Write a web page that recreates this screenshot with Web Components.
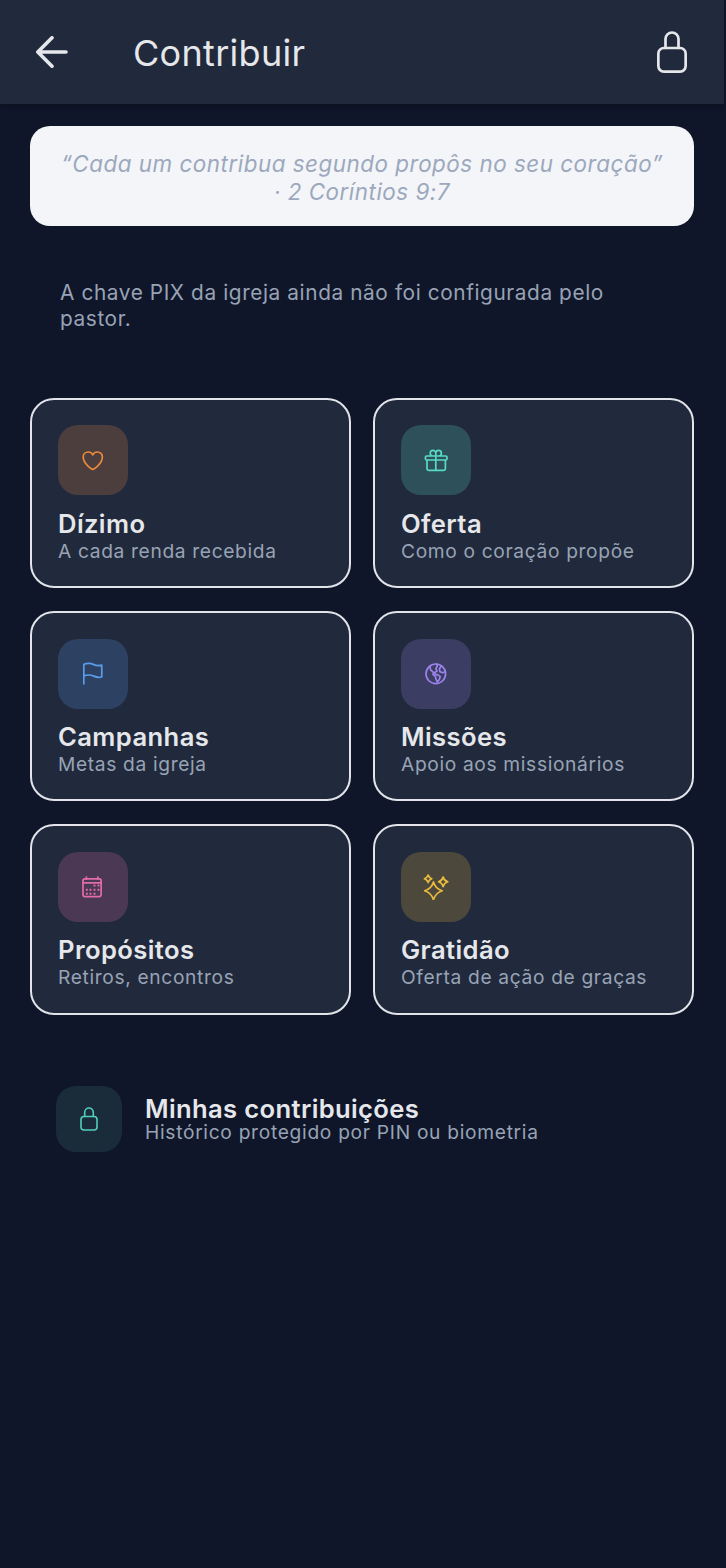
<!DOCTYPE html>
<html lang="pt">
<head>
<meta charset="utf-8">
<title>Contribuir</title>
<style>
	html, body {
		margin: 0;
		height: 100%;
		background: #0f1629;
	}
	body {
		font-family: Inter, "Liberation Sans", sans-serif;
		display: flex;
		flex-direction: column;
	}
</style>
</head>
<body>
<contrib-screen>
	<app-bar slot="bar" heading="Contribuir"></app-bar>
	<verse-card>“Cada um contribua segundo propôs no seu coração” · 2 Coríntios 9:7</verse-card>
	<pix-note>A chave PIX da igreja ainda não foi configurada pelo pastor.</pix-note>
	<card-grid>
		<contrib-card icon="heart" color="#fb923c" heading="Dízimo" detail="A cada renda recebida"></contrib-card>
		<contrib-card icon="gift" color="#5eead4" heading="Oferta" detail="Como o coração propõe"></contrib-card>
		<contrib-card icon="flag" color="#60a5fa" heading="Campanhas" detail="Metas da igreja"></contrib-card>
		<contrib-card icon="globe" color="#a78bfa" heading="Missões" detail="Apoio aos missionários"></contrib-card>
		<contrib-card icon="calendar" color="#f472b6" heading="Propósitos" detail="Retiros, encontros"></contrib-card>
		<contrib-card icon="sparkles" color="#fcc83c" heading="Gratidão" detail="Oferta de ação de graças"></contrib-card>
	</card-grid>
	<history-row heading="Minhas contribuições" detail="Histórico protegido por PIN ou biometria"></history-row>
</contrib-screen>

<script>
const ICONS = {
	heart: `<path d="M21 8.25c0-2.485-2.099-4.5-4.688-4.5-1.935 0-3.597 1.126-4.312 2.733-.715-1.607-2.377-2.733-4.313-2.733C5.1 3.75 3 5.765 3 8.25c0 7.22 9 12 9 12s9-4.78 9-12Z"/>`,
	gift: `<path d="M21 11.25v8.25a1.5 1.5 0 0 1-1.5 1.5H5.25a1.5 1.5 0 0 1-1.5-1.5v-8.25M12 4.875A2.625 2.625 0 1 0 9.375 7.5H12m0-2.625V7.5m0-2.625A2.625 2.625 0 1 1 14.625 7.5H12m0 0V21m-8.625-9.75h18c.621 0 1.125-.504 1.125-1.125v-1.5c0-.621-.504-1.125-1.125-1.125h-18c-.621 0-1.125.504-1.125 1.125v1.5c0 .621.504 1.125 1.125 1.125Z"/>`,
	flag: `<path d="M3.6 21.4V3C7 2 10.5 2.2 13 3.4S17.5 4.7 20.4 3.9V15C17.5 15.7 15.5 15.4 13 14.2S7 12.8 3.6 13.9"/>`,
	globe: `<circle cx="12" cy="12" r="9.2"/><path d="M6.5 4.9 7 8.2 9.8 10.6 9.4 12.8 11.8 14.6 12 16.6 13.4 19.6 15.2 17.6 16.2 14.6 14 13 11.6 12.6 11 10.8 13.2 9.4 12 7 13.4 5 12.8 2.9M17.2 4.6 15.4 7.2 15.8 10 18.6 11 20.9 10"/>`,
	calendar: `<rect x="2.8" y="4.6" width="17" height="16.6" rx="1.9"/><path d="M2.8 8.4H19.8M6 2.8V4.6M16.7 2.8V4.6"/><g fill="currentColor" stroke="none"><rect x="12.7" y="9.9" width="1.8" height="1.8"/><rect x="16.4" y="9.9" width="1.8" height="1.8"/><rect x="5.5" y="13.9" width="1.8" height="1.8"/><rect x="8.9" y="13.9" width="1.8" height="1.8"/><rect x="12.7" y="13.9" width="1.8" height="1.8"/><rect x="16.4" y="13.9" width="1.8" height="1.8"/><rect x="5.5" y="17.6" width="1.8" height="1.8"/><rect x="8.9" y="17.6" width="1.8" height="1.8"/><rect x="12.7" y="17.6" width="1.8" height="1.8"/></g>`,
	sparkles: `<path d="M9.8 7.4Q11.8 13.8 18 15.75 11.8 17.7 9.8 24.1 7.8 17.7 1.6 15.75 7.8 13.8 9.8 7.4Z"/><path d="M4.8 1Q5.6 3.7 8.3 4.5 5.6 5.3 4.8 8 4 5.3 1.3 4.5 4 3.7 4.8 1Z"/><path d="M18.9 2.8Q19.8 6.4 23.2 7.3 19.8 8.2 18.9 11.8 18 8.2 14.6 7.3 18 6.4 18.9 2.8Z"/>`,
};

class AppBar extends HTMLElement {
	constructor() {
		super();
		this.attachShadow({ mode: "open" }).innerHTML = `<style>
			:host {
				display: flex;
				align-items: center;
				height: 104px;
				margin-right: 2px;
				padding: 0 36px;
				background: #212a3c;
				color: #e5e7eb;
				box-shadow: 0 2px 6px rgba(0, 0, 0, 0.25);
			}
			.back { display: block; width: 32px; height: 32px; }
			h1 {
				flex: 1;
				margin: 2px 0 0 65px;
				font: 400 36px/44px Inter, "Liberation Sans", sans-serif;
				letter-spacing: 0.3px;
			}
			.lock { display: block; width: 30px; height: 42px; margin-right: 1px; }
		</style>
		<svg class="back" viewBox="0 0 32 32" fill="none" stroke="currentColor" stroke-width="3.6" stroke-linecap="round" stroke-linejoin="round">
			<path d="M1.8 16H30M16 1.8 1.8 16 16 30.2"/>
		</svg>
		<h1>${this.getAttribute("heading")}</h1>
		<svg class="lock" viewBox="0 0 30 42" fill="none" stroke="currentColor" stroke-width="2.7" stroke-linecap="round" stroke-linejoin="round">
			<path d="M8.5 17V8a6.5 6.5 0 0 1 13 0v9"/>
			<rect x="1.35" y="17" width="27.3" height="23.6" rx="5.5"/>
		</svg>`;
	}
}
customElements.define("app-bar", AppBar);

class VerseCard extends HTMLElement {
	constructor() {
		super();
		this.attachShadow({ mode: "open" }).innerHTML = `<style>
			:host {
				display: block;
				box-sizing: border-box;
				height: 100px;
				margin: 22px 32px 0 30px;
				padding: 24px 28px;
				border-radius: 20px;
				background: #f3f5f9;
				color: #9ca8bd;
				font: italic 400 22.4px/28px Inter, "Liberation Sans", sans-serif;
				letter-spacing: 0.52px;
				text-align: center;
			}
		</style><slot></slot>`;
	}
}
customElements.define("verse-card", VerseCard);

class PixNote extends HTMLElement {
	constructor() {
		super();
		this.attachShadow({ mode: "open" }).innerHTML = `<style>
			:host {
				display: block;
				margin: 54px 88px 0 60px;
				color: #98a3b5;
				font: 400 20.8px/26px Inter, "Liberation Sans", sans-serif;
				letter-spacing: 0.6px;
			}
		</style><slot></slot>`;
	}
}
customElements.define("pix-note", PixNote);

class CardGrid extends HTMLElement {
	constructor() {
		super();
		this.attachShadow({ mode: "open" }).innerHTML = `<style>
			:host {
				display: grid;
				grid-template-columns: 321px 321px;
				grid-auto-rows: 190.4px;
				gap: 23px 22px;
				margin: 65.6px 0 0 30px;
			}
		</style><slot></slot>`;
	}
}
customElements.define("card-grid", CardGrid);

class ContribCard extends HTMLElement {
	constructor() {
		super();
		const color = this.getAttribute("color");
		this.attachShadow({ mode: "open" }).innerHTML = `<style>
			:host {
				display: flex;
				flex-direction: column;
				box-sizing: border-box;
				padding: 25.8px 26px 0;
				border: 2px solid #e2e4ea;
				border-radius: 24px;
				background: #212a3c;
				font-family: Inter, "Liberation Sans", sans-serif;
			}
			.tile {
				display: flex;
				align-items: center;
				justify-content: center;
				width: 70px;
				height: 70px;
				border-radius: 20px;
				background: color-mix(in srgb, ${color} 20%, transparent);
			}
			svg { width: 25.6px; height: 25.6px; color: ${color}; opacity: 0.9; }
			strong {
				margin-top: 12.2px;
				color: #e5e7eb;
				font-size: 25.6px;
				font-weight: 600;
				line-height: 32px;
				letter-spacing: 0.4px;
			}
			span {
				color: #98a3b5;
				font-size: 19.2px;
				line-height: 22px;
				letter-spacing: 0.65px;
			}
		</style>
		<div class="tile">
			<svg viewBox="0 0 24 24" fill="none" stroke="currentColor" stroke-width="1.6" stroke-linecap="round" stroke-linejoin="round">${ICONS[this.getAttribute("icon")]}</svg>
		</div>
		<strong>${this.getAttribute("heading")}</strong>
		<span>${this.getAttribute("detail")}</span>`;
	}
}
customElements.define("contrib-card", ContribCard);

class HistoryRow extends HTMLElement {
	constructor() {
		super();
		this.attachShadow({ mode: "open" }).innerHTML = `<style>
			:host {
				display: flex;
				align-items: center;
				gap: 23px;
				margin: 71.2px 0 0 56px;
				font-family: Inter, "Liberation Sans", sans-serif;
			}
			.tile {
				display: flex;
				align-items: center;
				justify-content: center;
				width: 66px;
				height: 66px;
				border-radius: 20px;
				background: #1a2c3a;
			}
			svg { display: block; width: 18px; height: 24px; opacity: 0.85; }
			.text { display: flex; flex-direction: column; margin-bottom: 2px; }
			strong {
				color: #e5e7eb;
				font-size: 25.6px;
				font-weight: 600;
				line-height: 28px;
				letter-spacing: 0.35px;
			}
			span {
				color: #98a3b5;
				font-size: 19.2px;
				line-height: 18px;
				letter-spacing: 0.7px;
			}
		</style>
		<div class="tile">
			<svg viewBox="0 0 18 24" fill="none" stroke="#5eead4" stroke-width="1.6" stroke-linecap="round" stroke-linejoin="round">
				<path d="M4.7 9.5V5.3a4.3 4.3 0 0 1 8.6 0v4.2"/>
				<rect x="1" y="9.5" width="16" height="13.5" rx="3"/>
			</svg>
		</div>
		<div class="text">
			<strong>${this.getAttribute("heading")}</strong>
			<span>${this.getAttribute("detail")}</span>
		</div>`;
	}
}
customElements.define("history-row", HistoryRow);

class ContribScreen extends HTMLElement {
	constructor() {
		super();
		this.attachShadow({ mode: "open" }).innerHTML = `<style>
			:host { display: block; flex: 1; }
		</style><slot name="bar"></slot><slot></slot>`;
	}
}
customElements.define("contrib-screen", ContribScreen);
</script>
</body>
</html>
